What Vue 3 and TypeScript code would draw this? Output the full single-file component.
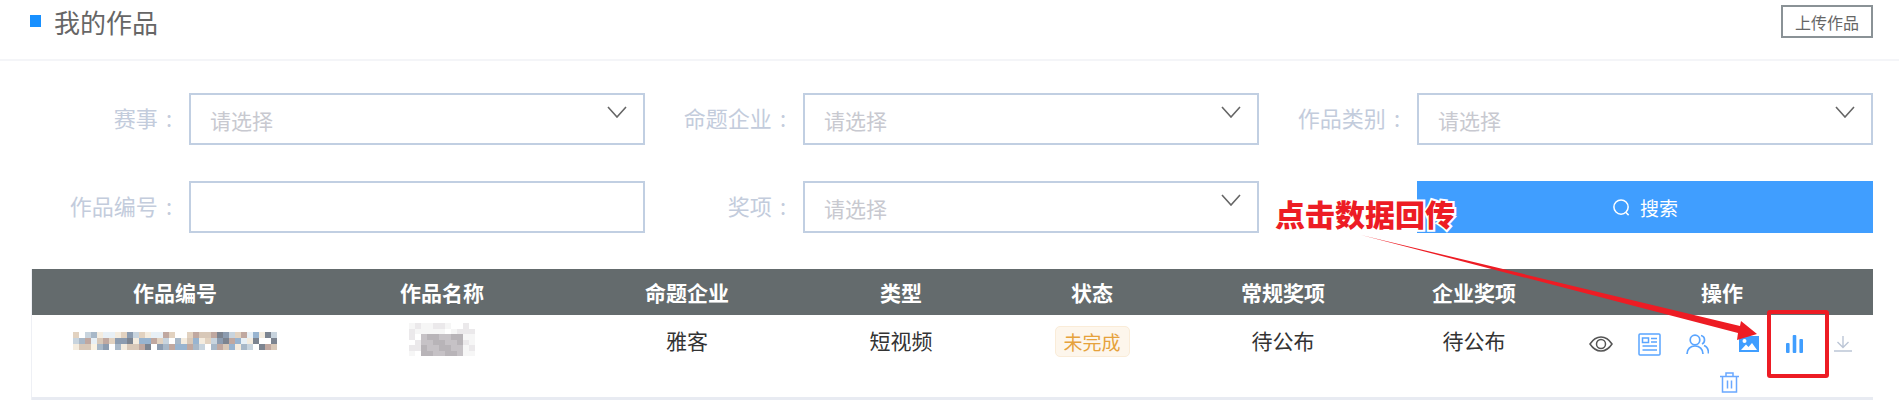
<template>
  <div class="page">
    <div class="head">
      <div class="title"><i class="mark"></i>我的作品</div>
      <button class="upload">上传作品</button>
    </div>

    <div class="filters">
      <div v-for="f in filters" :key="f.label" class="field">
        <label>{{ f.label }}<span class="colon">:</span></label>
        <div class="box">
          <span v-if="f.select" class="ph">请选择</span>
          <svg v-if="f.select" class="chev" viewBox="0 0 20 12" width="20" height="12">
            <path d="M1 1l9 10 9-10" fill="none" stroke="#666" stroke-width="1.6" />
          </svg>
        </div>
      </div>
      <div class="field">
        <span class="spacer"></span>
        <button class="search">
          <svg viewBox="0 0 20 20" width="19" height="19">
            <circle cx="9.5" cy="9.5" r="7.5" fill="none" stroke="#fff" stroke-width="1.6" />
            <path d="M14.5 15l3 3" stroke="#fff" stroke-width="1.6" />
          </svg>
          搜索
        </button>
      </div>
    </div>

    <div class="table">
      <div class="row thead">
        <div v-for="h in headers" :key="h">{{ h }}</div>
      </div>
      <div class="row tbody">
        <div class="cell">
          <div class="mosaic code">
            <i v-for="(c, i) in codeCells" :key="i" :style="{ background: c }"></i>
          </div>
        </div>
        <div class="cell">
          <div class="mosaic name">
            <i v-for="(c, i) in nameCells" :key="i" :style="{ background: c }"></i>
          </div>
        </div>
        <div class="cell">雅客</div>
        <div class="cell">短视频</div>
        <div class="cell"><span class="tag">未完成</span></div>
        <div class="cell">待公布</div>
        <div class="cell">待公布</div>
        <div class="actions">
          <span class="act">
            <svg viewBox="0 0 24 16" width="24" height="16" fill="none" stroke="#555" stroke-width="1.5">
              <path d="M1 8c3-4.600 7-7 11-7s8 2.400 11 7c-3 4.600-7 7-11 7S4 12.600 1 8z" />
              <circle cx="12" cy="8" r="4.500" />
            </svg>
          </span>
          <span class="act">
            <svg viewBox="0 0 23 23" width="23" height="23" fill="none" stroke="#5aa5ff" stroke-width="1.5">
              <rect x="1" y="1" width="21" height="21" rx="1" />
              <rect x="4.500" y="5" width="6" height="4.500" />
              <path d="M13 5.500h6M13 9h6M4.500 13h14.500M4.500 17h14.500" />
            </svg>
          </span>
          <span class="act">
            <svg viewBox="0 0 23 20" width="23" height="20" fill="none" stroke="#5aa5ff" stroke-width="1.7">
              <circle cx="9" cy="6" r="4.800" />
              <path d="M1 20c0-5 3.500-8 8-8s8 3 8 8M15 1.500c2.500.5 3.500 2.500 3.500 4.500s-1 3.300-2.500 4M18 11.500c3 1 4.500 4 4.500 8" />
            </svg>
          </span>
          <span class="act pic">
            <svg viewBox="0 0 20 16" width="20" height="16">
              <path fill="#409eff" fill-rule="evenodd" d="M0 0h20v16H0zM2 14h16l-5-7-3.500 4-2.500-2.500zM5.500 3a2 2 0 100 4 2 2 0 000-4z" />
            </svg>
          </span>
          <span class="act">
            <svg viewBox="0 0 17 18" width="17" height="18" fill="#409eff">
              <rect x="0" y="8" width="3.600" height="10" rx="1" />
              <rect x="6.700" y="0" width="3.600" height="18" rx="1" />
              <rect x="13.400" y="4" width="3.600" height="14" rx="1" />
            </svg>
          </span>
          <span class="act">
            <svg viewBox="0 0 18 16" width="18" height="16" fill="none" stroke="#bcc6d6" stroke-width="1.4">
              <path d="M9 0v11M3.500 6L9 11.500 14.500 6M0 15h18" />
            </svg>
          </span>
          <span class="act trash">
            <svg viewBox="0 0 19 21" width="19" height="21" fill="none" stroke="#6aa8ff" stroke-width="1.5">
              <path d="M0 4.500h19M6 4.500V1h7v3.500M2.500 4.500V20h14V4.500M7.500 8.500v8M11.500 8.500v8" />
            </svg>
          </span>
        </div>
      </div>
    </div>

    <!-- 红色标注 -->
    <svg class="mark-layer" viewBox="0 0 1899 405" width="1899" height="405">
      <rect x="1769" y="312" width="58" height="64" rx="1" fill="none" stroke="#ed1c24" stroke-width="4" />
      <path fill="#ed1c24" d="M1361 235L1740 326L1741 321L1757 334L1737 340L1738 333z" />
    </svg>
    <div class="note">点击数据回传</div>
  </div>
</template>

<script setup lang="ts">
const filters = [
  { label: '赛事', select: true },
  { label: '命题企业', select: true },
  { label: '作品类别', select: true },
  { label: '作品编号', select: false },
  { label: '奖项', select: true }
]

const headers = ['作品编号', '作品名称', '命题企业', '类型', '状态', '常规奖项', '企业奖项', '操作']

// 打码区域的色块
const palette = ['#ffffff', '#f4ecdf', '#d8c8b8', '#a8b8c8', '#8c9cb0', '#c0a8a0', '#e8f0f6', '#7c8490', '#c8d4de', '#fbf3e4', '#98b4d0', '#e2d2c0']
let seed = 17
function next(n: number) {
  seed = (seed * 1103 + 12345) % 65536
  return (seed >> 4) % n
}
const codeCells: string[] = []
for (let i = 0; i < 102; i++) {
  codeCells.push(palette[next(palette.length)])
}

const grey = ['#ffffff', '#f6f6f6', '#ebe9eb', '#c6c2c6', '#b8b4b8']
const nameCells: string[] = []
for (let r = 0; r < 6; r++) {
  for (let c = 0; c < 11; c++) {
    const inner = r >= 2 && c >= 2 && c <= 8
    nameCells.push(inner ? grey[3 + next(2)] : grey[next(3)])
  }
}
</script>

<style scoped>
.page {
  position: relative;
  width: 1899px;
  height: 405px;
  overflow: hidden;
  background: #fff;
  font-family: "Noto Sans CJK SC", "Liberation Sans", sans-serif;
  color: #333;
}

.head {
  height: 54px;
  display: flex;
  align-items: flex-start;
  justify-content: space-between;
  padding: 5px 26px 0 30px;
  border-bottom: 2px solid #f4f5f8;
  margin-bottom: 32px;
}

.title {
  display: flex;
  align-items: center;
  height: 32px;
  font-size: 26px;
  color: #666;
}

.mark {
  width: 11px;
  height: 12px;
  margin-right: 13px;
  background: #1890ff;
}

.upload {
  width: 92px;
  height: 33px;
  padding: 0;
  background: #fff;
  border: 2px solid #8a9296;
  color: #666;
  font: 16px "Noto Sans CJK SC", sans-serif;
}

.filters {
  display: grid;
  grid-template-columns: repeat(3, 614px);
  row-gap: 36px;
  padding-left: 31px;
}

.field {
  display: flex;
  align-items: stretch;
  height: 52px;
}

.field label {
  width: 141px;
  margin-right: 17px;
  flex: none;
  padding-top: 6px;
  text-align: right;
  font-size: 22px;
  line-height: 36px;
  color: #c3ccdc;
  white-space: nowrap;
}

.colon {
  margin-left: 8px;
}

.spacer {
  width: 158px;
  flex: none;
}

.box {
  position: relative;
  flex: 1;
  box-sizing: border-box;
  border: 2px solid #c1cfe2;
  padding-left: 19px;
  line-height: 50px;
}

.ph {
  font-size: 21px;
  color: #c8c9d0;
}

.chev {
  position: absolute;
  right: 16px;
  top: 11px;
}

.search {
  flex: 1;
  display: flex;
  align-items: center;
  justify-content: center;
  gap: 9px;
  padding: 0;
  border: 0;
  background: #409eff;
  color: #fff;
  font: 19px "Noto Sans CJK SC", sans-serif;
}

.table {
  margin: 36px 26px 0 31px;
  border-left: 1px solid #eef0f5;
}

.row {
  display: grid;
  grid-template-columns: 286px 248px 242px 186px 196px 186px 196px 300px;
}

.thead {
  height: 46px;
  align-items: center;
  text-align: center;
  background: #646b6d;
  color: #fff;
  font-size: 21px;
  font-weight: 700;
}

.tbody {
  height: 85px;
  box-sizing: border-box;
  border-bottom: 3px solid #e8ebf2;
  font-size: 21px;
}

.cell {
  display: flex;
  justify-content: center;
  padding-top: 11px;
  height: 32px;
  line-height: 29px;
}

.mosaic {
  display: grid;
}

.mosaic i {
  display: block;
}

.code {
  grid-template-columns: repeat(34, 6px);
  grid-auto-rows: 6px;
  margin-top: 6px;
}

.name {
  grid-template-columns: repeat(11, 6px);
  grid-auto-rows: 5.500px;
  margin-top: -3px;
}

.tag {
  box-sizing: border-box;
  width: 75px;
  height: 31px;
  line-height: 29px;
  text-align: center;
  border: 1px solid #faecd8;
  border-radius: 5px;
  background: #fdf6ec;
  color: #e6a23c;
  font-size: 19px;
}

.actions {
  display: flex;
  flex-wrap: wrap;
  align-content: flex-start;
  justify-content: center;
  padding-top: 11px;
}

.act {
  box-sizing: border-box;
  width: 48.500px;
  height: 36px;
  display: flex;
  align-items: center;
  justify-content: center;
}

.pic {
  padding-left: 6px;
}

.trash {
  margin-left: 14px;
  height: 40px;
}

.mark-layer {
  position: absolute;
  left: 0;
  top: 0;
  pointer-events: none;
}

.note {
  position: absolute;
  left: 1275px;
  top: 192px;
  font-size: 30px;
  line-height: 42px;
  font-weight: 900;
  white-space: nowrap;
  color: #ed1c24;
  -webkit-text-stroke: 4px #fff;
  paint-order: stroke fill;
}
</style>
